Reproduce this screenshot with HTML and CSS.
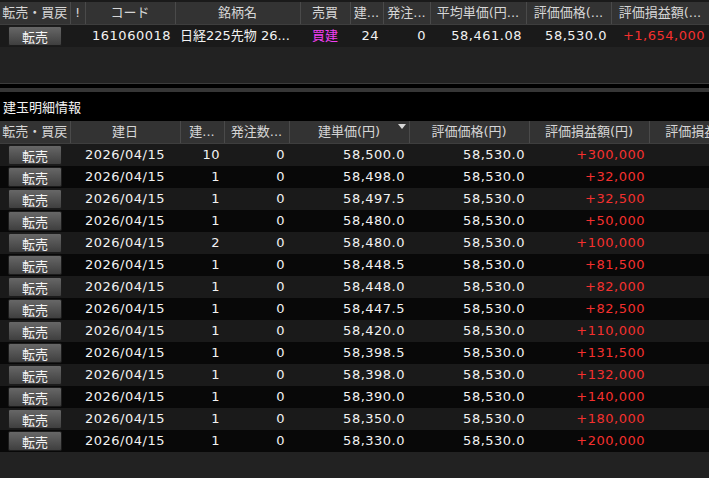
FILE: index.html
```html
<!DOCTYPE html>
<html lang="ja">
<head>
<meta charset="utf-8">
<title>建玉</title>
<link rel="stylesheet" href="styles.css">
</head>
<body>
<div class="screen">
  <section class="panel-top">
    <table class="grid top-grid">
      <colgroup>
        <col class="w70"><col class="w15"><col class="w90"><col class="w125"><col class="w50"><col class="w33"><col class="w47"><col class="w96"><col class="w85"><col class="w98">
      </colgroup>
      <thead>
        <tr>
          <th>転売・買戻</th><th>!</th><th>コード</th><th>銘柄名</th><th>売買</th><th>建...</th><th>発注...</th><th>平均単価(円...</th><th>評価価格(...</th><th>評価損益額(...</th>
        </tr>
      </thead>
      <tbody>
        <tr class="odd">
          <td class="c"><span class="btn">転売</span></td>
          <td></td>
          <td class="r num">161060018</td>
          <td class="l name">日経225先物 26...</td>
          <td class="c buy">買建</td>
          <td class="r num">24</td>
          <td class="r num">0</td>
          <td class="r num">58,461.08</td>
          <td class="r num">58,530.0</td>
          <td class="r num red">+1,654,000</td>
        </tr>
      </tbody>
    </table>
  </section>
  <div class="gap"></div>
  <div class="splitter"></div>
  <div class="title">建玉明細情報</div>
  <section class="panel-bottom">
    <table class="grid bottom-grid">
      <colgroup>
        <col class="w70"><col class="w110"><col class="w44"><col class="w65"><col class="w120"><col class="w120"><col class="w120"><col class="w120">
      </colgroup>
      <thead>
        <tr>
          <th>転売・買戻</th><th>建日</th><th>建...</th><th>発注数...</th><th class="sorted">建単価(円)<span class="tri"></span></th><th>評価価格(円)</th><th>評価損益額(円)</th><th>評価損益率(%)</th>
        </tr>
      </thead>
      <tbody>
        <tr class="odd"><td class="c"><span class="btn">転売</span></td><td class="c num">2026/04/15</td><td class="r num">10</td><td class="r num">0</td><td class="r num">58,500.0</td><td class="r num">58,530.0</td><td class="r num red">+300,000</td><td></td></tr>
        <tr class="even"><td class="c"><span class="btn">転売</span></td><td class="c num">2026/04/15</td><td class="r num">1</td><td class="r num">0</td><td class="r num">58,498.0</td><td class="r num">58,530.0</td><td class="r num red">+32,000</td><td></td></tr>
        <tr class="odd"><td class="c"><span class="btn">転売</span></td><td class="c num">2026/04/15</td><td class="r num">1</td><td class="r num">0</td><td class="r num">58,497.5</td><td class="r num">58,530.0</td><td class="r num red">+32,500</td><td></td></tr>
        <tr class="even"><td class="c"><span class="btn">転売</span></td><td class="c num">2026/04/15</td><td class="r num">1</td><td class="r num">0</td><td class="r num">58,480.0</td><td class="r num">58,530.0</td><td class="r num red">+50,000</td><td></td></tr>
        <tr class="odd"><td class="c"><span class="btn">転売</span></td><td class="c num">2026/04/15</td><td class="r num">2</td><td class="r num">0</td><td class="r num">58,480.0</td><td class="r num">58,530.0</td><td class="r num red">+100,000</td><td></td></tr>
        <tr class="even"><td class="c"><span class="btn">転売</span></td><td class="c num">2026/04/15</td><td class="r num">1</td><td class="r num">0</td><td class="r num">58,448.5</td><td class="r num">58,530.0</td><td class="r num red">+81,500</td><td></td></tr>
        <tr class="odd"><td class="c"><span class="btn">転売</span></td><td class="c num">2026/04/15</td><td class="r num">1</td><td class="r num">0</td><td class="r num">58,448.0</td><td class="r num">58,530.0</td><td class="r num red">+82,000</td><td></td></tr>
        <tr class="even"><td class="c"><span class="btn">転売</span></td><td class="c num">2026/04/15</td><td class="r num">1</td><td class="r num">0</td><td class="r num">58,447.5</td><td class="r num">58,530.0</td><td class="r num red">+82,500</td><td></td></tr>
        <tr class="odd"><td class="c"><span class="btn">転売</span></td><td class="c num">2026/04/15</td><td class="r num">1</td><td class="r num">0</td><td class="r num">58,420.0</td><td class="r num">58,530.0</td><td class="r num red">+110,000</td><td></td></tr>
        <tr class="even"><td class="c"><span class="btn">転売</span></td><td class="c num">2026/04/15</td><td class="r num">1</td><td class="r num">0</td><td class="r num">58,398.5</td><td class="r num">58,530.0</td><td class="r num red">+131,500</td><td></td></tr>
        <tr class="odd"><td class="c"><span class="btn">転売</span></td><td class="c num">2026/04/15</td><td class="r num">1</td><td class="r num">0</td><td class="r num">58,398.0</td><td class="r num">58,530.0</td><td class="r num red">+132,000</td><td></td></tr>
        <tr class="even"><td class="c"><span class="btn">転売</span></td><td class="c num">2026/04/15</td><td class="r num">1</td><td class="r num">0</td><td class="r num">58,390.0</td><td class="r num">58,530.0</td><td class="r num red">+140,000</td><td></td></tr>
        <tr class="odd"><td class="c"><span class="btn">転売</span></td><td class="c num">2026/04/15</td><td class="r num">1</td><td class="r num">0</td><td class="r num">58,350.0</td><td class="r num">58,530.0</td><td class="r num red">+180,000</td><td></td></tr>
        <tr class="even"><td class="c"><span class="btn">転売</span></td><td class="c num">2026/04/15</td><td class="r num">1</td><td class="r num">0</td><td class="r num">58,330.0</td><td class="r num">58,530.0</td><td class="r num red">+200,000</td><td></td></tr>
      </tbody>
    </table>
  </section>
</div>
</body>
</html>
```

FILE: styles.css
```css
* { box-sizing: border-box; }
html, body {
  margin: 0;
  padding: 0;
  background: #000;
}
body {
  font-family: "DejaVu Sans", "Noto Sans CJK JP", sans-serif;
  font-size: 13px;
  color: #f2f2f2;
}
.screen {
  width: 709px;
  height: 478px;
  overflow: hidden;
  display: flex;
  flex-direction: column;
}
.panel-top {
  height: 84px;
  flex: 0 0 84px;
  background: #222;
  padding-top: 2px;
  border-top: 0;
  border-bottom: 1px solid #3c3c3c;
  overflow: hidden;
  box-shadow: inset 0 2px 0 #1a1a1a;
}
.gap { flex: 0 0 4px; background: #000; }
.splitter { flex: 0 0 4px; background: #363636; }
.title {
  flex: 0 0 29px;
  height: 29px;
  line-height: 29px;
  padding-left: 3px;
  background: #000;
  color: #f4f4f4;
  font-family: "Noto Sans CJK JP", sans-serif;
}
.panel-bottom {
  flex: 1 1 auto;
  background: #222;
  overflow: hidden;
}
.grid {
  border-collapse: collapse;
  table-layout: fixed;
}
.top-grid { width: 709px; }
.bottom-grid { width: 769px; }
.w15 { width: 15px; }
.w33 { width: 33px; }
.w44 { width: 44px; }
.w47 { width: 47px; }
.w50 { width: 50px; }
.w65 { width: 65px; }
.w70 { width: 70px; }
.w85 { width: 85px; }
.w90 { width: 90px; }
.w96 { width: 96px; }
.w98 { width: 98px; }
.w110 { width: 110px; }
.w120 { width: 120px; }
.w125 { width: 125px; }
.grid th {
  height: 22px;
  padding: 0;
  background: #333;
  color: #d6d6d6;
  font-weight: normal;
  text-align: center;
  white-space: nowrap;
  overflow: hidden;
  border-right: 1px solid #4a4a4a;
  border-bottom: 1px solid #3e3e3e;
  line-height: 21px;
}
.grid th.sorted { position: relative; }
.tri {
  position: absolute;
  right: 3px;
  top: 3px;
  width: 0;
  height: 0;
  border-left: 4px solid transparent;
  border-right: 4px solid transparent;
  border-top: 5px solid #d8d8d8;
}
.grid td {
  height: 22px;
  padding: 0;
  white-space: nowrap;
  overflow: hidden;
  line-height: 22px;
}
.odd td { background: #1a1a1a; }
.even td { background: #080808; }
.c { text-align: center; }
.r { text-align: right; padding-right: 4px !important; }
.l { text-align: left; padding-left: 5px !important; }
.num { letter-spacing: 0.5px; }
.name { letter-spacing: 0; }
.red { color: #f5302e; }
.buy { color: #f03ef0; }
.btn {
  display: inline-block;
  width: 54px;
  height: 20px;
  line-height: 19px;
  vertical-align: middle;
  margin-top: -1px;
  border: 1px solid #1c1c1c;
  border-radius: 2px;
  background: linear-gradient(#676767, #3f3f3f);
  color: #f6f6f6;
  font-family: "Noto Sans CJK JP", sans-serif;
  font-size: 13px;
  letter-spacing: 0;
}
```
